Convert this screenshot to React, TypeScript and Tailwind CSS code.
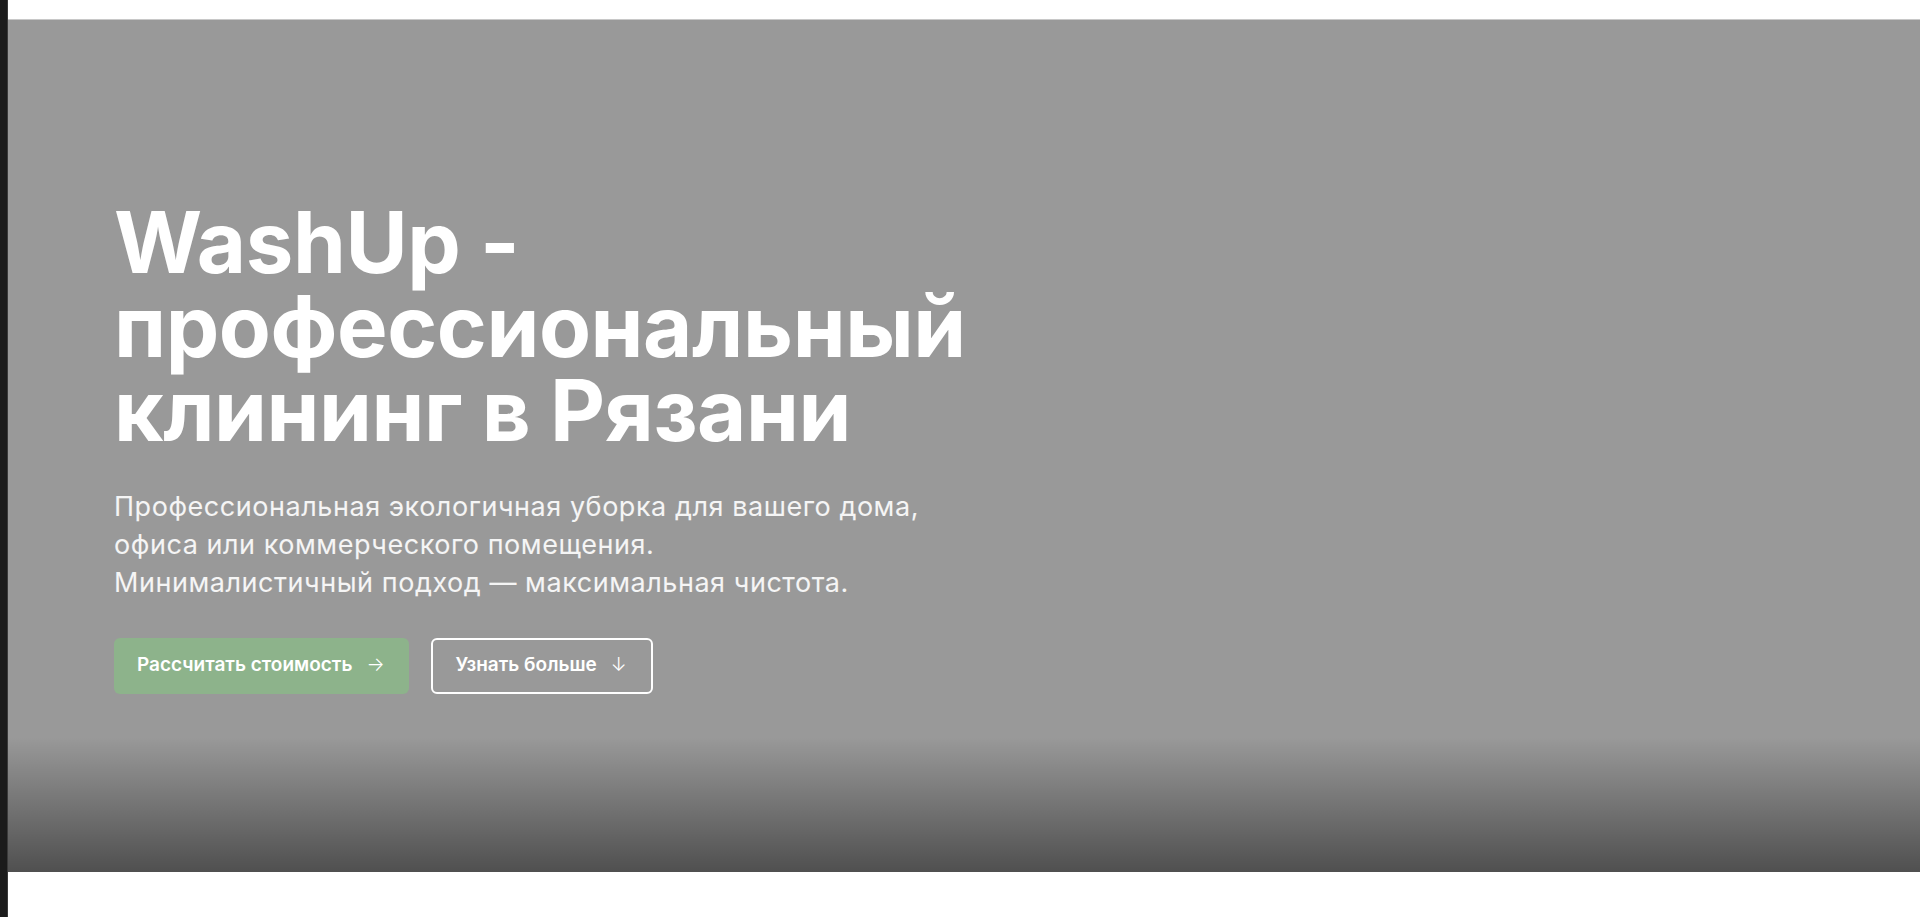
import React from "react";

export default function App() {
  return (
    <div className="flex min-h-[917px] w-full bg-white" style={{ fontFamily: "Inter, 'Noto Sans', sans-serif" }}>
      <div className="w-[8px] shrink-0 bg-[#1b1b1b] border-r border-[#3a3a3a]" />
      <div className="flex min-w-0 flex-1 flex-col">
        <div className="h-[20px] shrink-0 border-b border-[#c8c8c8] bg-white" />
        <section className="relative flex h-[852px] items-center overflow-hidden bg-[#999999]">
          <div className="pointer-events-none absolute inset-x-0 bottom-0 h-[135px] bg-gradient-to-t from-black/[0.48] to-transparent" />
          <div className="relative z-10 pl-[106px] pt-[2px]">
            <div className="max-w-[896px]">
              <h1 className="text-[85px] font-bold leading-[84px] tracking-[-0.005em] text-white">
                WashUp - профессиональный клининг в Рязани
              </h1>
              <p className="mt-[35px] max-w-[830px] text-[27px] leading-[38px] tracking-[0.02em] text-white/90">
                Профессиональная экологичная уборка для вашего дома, офиса или коммерческого помещения.
                <br />
                Минималистичный подход — максимальная чистота.
              </p>
              <div className="mt-[36px] flex gap-[22px]">
                <button className="flex h-[56px] items-center gap-[14px] rounded-md bg-[#8db38b] pl-[23px] pr-[24px] text-[19px] font-semibold text-white">
                  <span>Рассчитать стоимость</span>
                  <span className="font-light">→</span>
                </button>
                <button className="flex h-[56px] items-center gap-[14px] rounded-md border-2 border-white pl-[23px] pr-[24px] text-[19px] font-semibold text-white">
                  <span>Узнать больше</span>
                  <span className="font-light">↓</span>
                </button>
              </div>
            </div>
          </div>
        </section>
        <div className="flex-1 bg-white" />
      </div>
    </div>
  );
}
